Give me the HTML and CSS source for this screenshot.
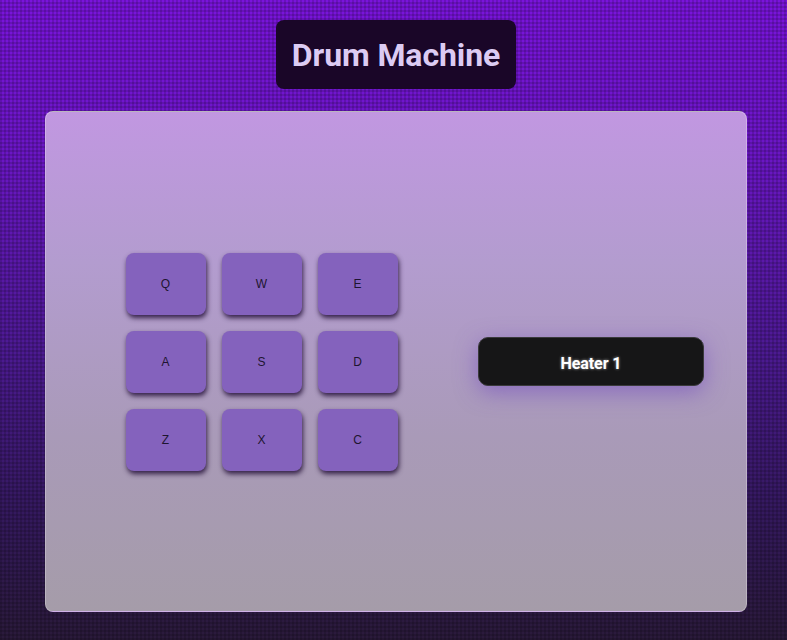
FILE: index.html
```html
<!DOCTYPE html>
<html>
<head>
<meta charset="utf-8">
<link rel="stylesheet" href="styles.css">
</head>
<body>
<div class="page">
  <h1 class="title">Drum Machine</h1>
  <div class="machine">
    <div class="pads">
      <button class="pad">Q</button>
      <button class="pad">W</button>
      <button class="pad">E</button>
      <button class="pad">A</button>
      <button class="pad">S</button>
      <button class="pad">D</button>
      <button class="pad">Z</button>
      <button class="pad">X</button>
      <button class="pad">C</button>
    </div>
    <div class="display">Heater 1</div>
  </div>
</div>
</body>
</html>
```
FILE: styles.css
```css
html, body {
  margin: 0;
  padding: 0;
  height: 100%;
}
body {
  background-color: #4a1890;
  background-image:
    linear-gradient(90deg, rgba(0,0,0,0.14) 50%, transparent 50%),
    linear-gradient(0deg, rgba(0,0,0,0.14) 50%, transparent 50%),
    linear-gradient(180deg, #7a14dc 0%, #6a16c4 25%, #4c1a92 55%, #34195e 80%, #2a1a3a 100%);
  background-size: 4px 4px, 4px 4px, 100% 100%;
  font-family: Roboto, "Liberation Sans", sans-serif;
  overflow: hidden;
}
.page {
  display: flex;
  flex-direction: column;
  align-items: center;
  padding-top: 20px;
  padding-left: 5px;
}
.title {
  margin: 0;
  width: 240px;
  height: 69px;
  box-sizing: border-box;
  display: flex;
  align-items: center;
  justify-content: center;
  background: #1a0628;
  border-radius: 8px;
  color: #dccbf3;
  font-family: Roboto, sans-serif;
  font-weight: 700;
  font-size: 32px;
  letter-spacing: -0.1px;
}
.machine {
  margin-top: 22px;
  width: 702px;
  height: 501px;
  box-sizing: border-box;
  border-radius: 8px;
  border: 1px solid rgba(255,255,255,0.25);
  background: linear-gradient(180deg, #c197e1 0%, #b39ccf 30%, #a99ab8 65%, #a59ca9 100%);
  display: flex;
  align-items: center;
  padding-left: 80px;
  gap: 80px;
}
.pads {
  display: grid;
  grid-template-columns: repeat(3, 80px);
  grid-auto-rows: 62px;
  gap: 16px;
}
.pad {
  border: none;
  border-radius: 8px;
  background: #8462bd;
  color: #1e1530;
  font-family: "Liberation Sans", Arial, sans-serif;
  font-size: 12px;
  padding: 0 1px 0 0;
  box-shadow: 1px 3px 5px rgba(30, 10, 50, 0.85);
}
.display {
  width: 226px;
  height: 49px;
  box-sizing: border-box;
  border-radius: 10px;
  background: #161617;
  border: 1px solid #3a3a3c;
  color: #ffffff;
  font-family: Roboto, sans-serif;
  font-weight: 700;
  font-size: 16px;
  letter-spacing: -0.1px;
  display: flex;
  align-items: center;
  justify-content: center;
  padding-top: 3px;
  text-shadow: 0 0 3px rgba(255,255,255,0.6);
  box-shadow: 0 6px 22px rgba(110, 70, 190, 0.55);
}
```
